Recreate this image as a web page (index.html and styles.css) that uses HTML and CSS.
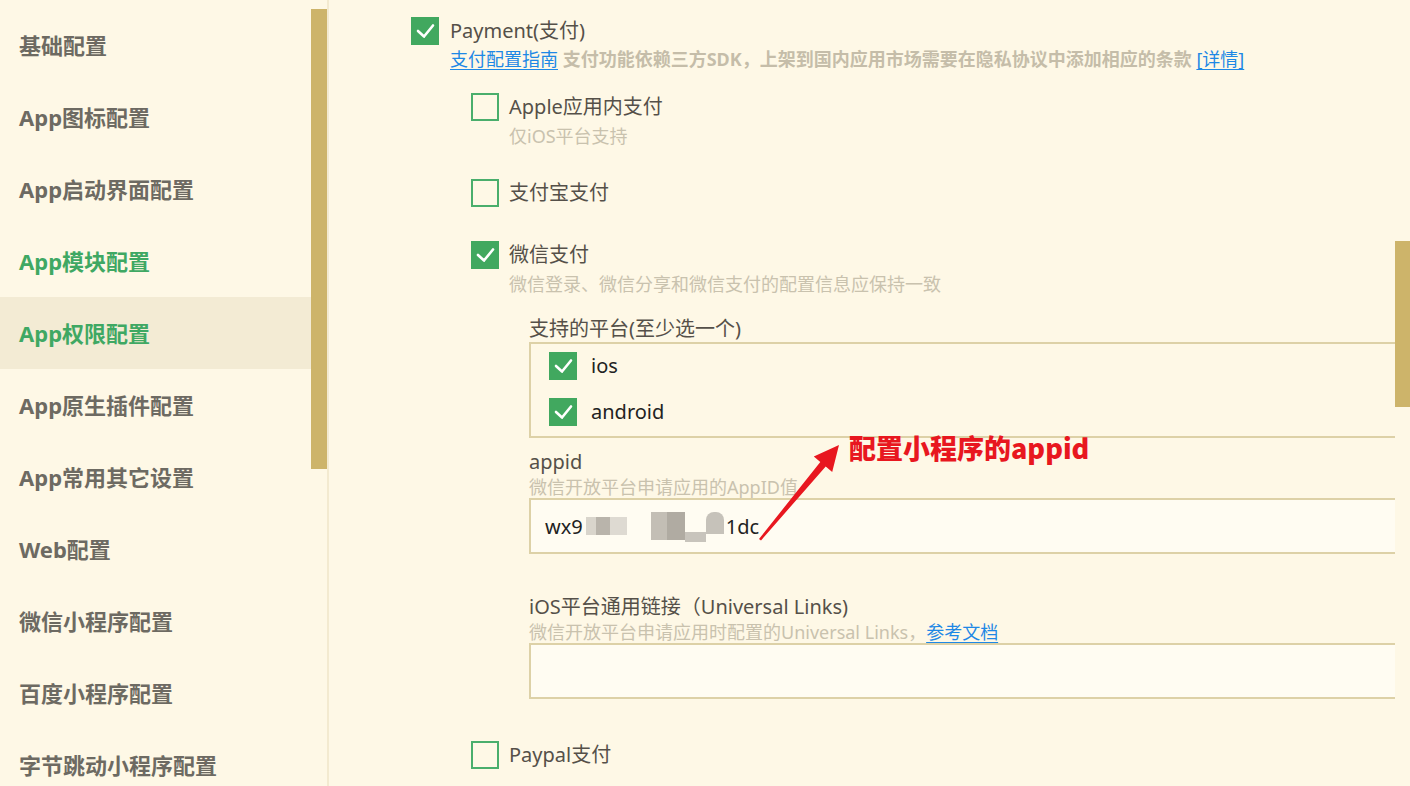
FILE: index.html
```html
<!DOCTYPE html>
<html lang="zh-CN">
<head>
<meta charset="utf-8">
<title>App权限配置</title>
<link rel="stylesheet" href="styles.css">
</head>
<body>
<div class="app">
  <aside class="sidebar">
    <nav class="nav">
      <div class="nav-item">基础配置</div>
      <div class="nav-item">App图标配置</div>
      <div class="nav-item">App启动界面配置</div>
      <div class="nav-item green">App模块配置</div>
      <div class="nav-item green active">App权限配置</div>
      <div class="nav-item">App原生插件配置</div>
      <div class="nav-item">App常用其它设置</div>
      <div class="nav-item">Web配置</div>
      <div class="nav-item">微信小程序配置</div>
      <div class="nav-item">百度小程序配置</div>
      <div class="nav-item">字节跳动小程序配置</div>
    </nav>
    <div class="side-scroll"><div class="side-thumb"></div></div>
  </aside>

  <main class="main">
    <div class="content">
      <div class="row">
        <span class="cb checked"><svg viewBox="0 0 28 28"><polyline points="7,14 13,19.5 22,8.5"/></svg></span>
        <span class="label">Payment(支付)</span>
      </div>
      <div class="top-desc"><a class="link">支付配置指南</a> 支付功能依赖三方SDK，上架到国内应用市场需要在隐私协议中添加相应的条款 <a class="link">[详情]</a></div>

      <div class="sublist">
        <div class="option">
          <div class="row">
            <span class="cb"></span>
            <span class="label">Apple应用内支付</span>
          </div>
          <div class="desc">仅iOS平台支持</div>
        </div>

        <div class="option">
          <div class="row">
            <span class="cb"></span>
            <span class="label">支付宝支付</span>
          </div>
        </div>

        <div class="option wechat">
          <div class="row">
            <span class="cb checked"><svg viewBox="0 0 28 28"><polyline points="7,14 13,19.5 22,8.5"/></svg></span>
            <span class="label">微信支付</span>
          </div>
          <div class="desc">微信登录、微信分享和微信支付的配置信息应保持一致</div>

          <div class="nested">
            <div class="field-label">支持的平台(至少选一个)</div>
            <div class="platform-box">
              <div class="row plat">
                <span class="cb checked"><svg viewBox="0 0 28 28"><polyline points="7,14 13,19.5 22,8.5"/></svg></span>
                <span class="label dark">ios</span>
              </div>
              <div class="row plat">
                <span class="cb checked"><svg viewBox="0 0 28 28"><polyline points="7,14 13,19.5 22,8.5"/></svg></span>
                <span class="label dark">android</span>
              </div>
            </div>

            <div class="field-label gap-s">appid</div>
            <div class="field-sub">微信开放平台申请应用的AppID值</div>
            <div class="input">
              <span>wx9</span><span class="mosaic"><i class="m1"></i><i class="m2"></i><i class="m3"></i><i class="m4"></i><i class="m5"></i><i class="m6"></i><i class="m7"></i><i class="m8"></i></span><span>1dc</span>
            </div>

            <div class="field-label gap-l">iOS平台通用链接（Universal Links)</div>
            <div class="field-sub">微信开放平台申请应用时配置的Universal Links，<a class="link">参考文档</a></div>
            <div class="input"></div>
          </div>
        </div>

        <div class="option">
          <div class="row">
            <span class="cb"></span>
            <span class="label">Paypal支付</span>
          </div>
        </div>
      </div>
    </div>
    <div class="main-scroll"><div class="main-thumb"></div></div>
  </main>

  <svg class="arrow" width="1410" height="786" viewBox="0 0 1410 786">
    <polygon points="839,445 832.2,471.9 825.7,466.4 761,540.5 759,539 820.3,462 813.8,456.5"/>
  </svg>
  <div class="annot">配置小程序的appid</div>
</div>
</body>
</html>
```

FILE: styles.css
```css
* { box-sizing: border-box; }

html, body {
  margin: 0;
  padding: 0;
  height: 786px;
  overflow: hidden;
  background: #fef8e6;
  font-family: "Noto Sans", "Noto Sans CJK SC", sans-serif;
}

.app {
  position: relative;
  display: flex;
  width: 1410px;
  height: 786px;
  overflow: hidden;
}

/* ---------- sidebar ---------- */
.sidebar {
  flex: none;
  width: 329px;
  display: flex;
  border-right: 2px solid #f3ead0;
}

.nav {
  width: 311px;
  padding-top: 9px;
}

.nav-item {
  height: 72px;
  line-height: 72px;
  padding-left: 19px;
  font-size: 22px;
  font-weight: 700;
  color: #6d6a62;
  white-space: nowrap;
}

.nav-item.green { color: #3fa863; }
.nav-item.active { background: #f3ebd4; }

.side-scroll {
  width: 16px;
  padding-top: 9px;
}

.side-thumb {
  height: 460px;
  background: #cdb46a;
}

/* ---------- main ---------- */
.main {
  flex: 1;
  display: flex;
  min-width: 0;
}

.content {
  flex: 1;
  min-width: 0;
  padding: 17px 0 0 82px;
}

.main-scroll {
  flex: none;
  width: 15px;
  padding-top: 241px;
}

.main-thumb {
  height: 166px;
  background: #cdb46a;
}

.row {
  display: flex;
  align-items: center;
  height: 28px;
  gap: 11px;
}

.cb {
  flex: none;
  width: 28px;
  height: 28px;
  border: 2px solid #4aae6c;
  display: flex;
  align-items: center;
  justify-content: center;
}

.cb.checked {
  background: #41a85f;
  border-color: #41a85f;
}

.cb svg {
  width: 28px;
  height: 28px;
  margin: -2px;
}

.cb svg polyline {
  fill: none;
  stroke: #ffffff;
  stroke-width: 2.6;
  stroke-linecap: round;
  stroke-linejoin: round;
}

.label {
  font-size: 20px;
  line-height: 28px;
  color: #555049;
  white-space: nowrap;
}

.label.dark { color: #222222; }

.link {
  color: #1e88e5;
  font-weight: 400;
  text-decoration: underline;
  text-underline-offset: 3px;
}

.top-desc {
  margin: 2px 0 0 39px;
  font-size: 18px;
  line-height: 24px;
  font-weight: 700;
  color: #c5bda9;
  white-space: nowrap;
}

.sublist {
  margin: 22px 0 0 60px;
}

.option {
  padding-bottom: 34px;
}

.option.wechat { padding-bottom: 42px; }

.option .row { gap: 10px; }

.desc {
  margin: 3px 0 -3px 38px;
  font-size: 18px;
  line-height: 24px;
  color: #c9c2ae;
  white-space: nowrap;
}

.nested {
  margin: 23px 0 0 58px;
}

.field-label {
  font-size: 20px;
  line-height: 26px;
  color: #555049;
  white-space: nowrap;
}

.field-label.gap-s { margin-top: 11px; }
.field-label.gap-l { margin-top: 40px; }

.field-sub {
  margin-top: 1px;
  font-size: 18px;
  line-height: 22px;
  color: #c9c2ae;
  white-space: nowrap;
}

.platform-box {
  border: 2px solid #ddd1a7;
  border-right: none;
  padding: 8px 18px 10px;
  display: flex;
  flex-direction: column;
  gap: 18px;
}

.platform-box .row { gap: 14px; }

.input {
  height: 56px;
  border: 2px solid #ddd1a7;
  border-right: none;
  background: #fffcf2;
  padding-left: 14px;
  display: flex;
  align-items: center;
  font-size: 20px;
  color: #222222;
}

.mosaic {
  display: inline-flex;
  align-items: center;
  height: 32px;
  margin: 0 2px 0 3px;
}

.mosaic i { display: block; }
.mosaic .m1 { width: 10px; height: 18px; background: #d9d5cc; }
.mosaic .m2 { width: 14px; height: 18px; background: #b9b4ab; }
.mosaic .m3 { width: 17px; height: 18px; background: #dedad2; }
.mosaic .m4 { width: 24px; height: 18px; background: transparent; }
.mosaic .m5 { width: 16px; height: 28px; background: #c3beb5; }
.mosaic .m6 { width: 18px; height: 28px; background: #b0aba2; }
.mosaic .m7 { width: 21px; height: 10px; background: #c8c4bc; align-self: flex-end; }
.mosaic .m8 { width: 18px; height: 22px; background: #c6c2ba; border-radius: 8px 8px 0 0; align-self: flex-start; margin-top: 2px; }

/* ---------- annotation overlay ---------- */
.arrow {
  position: absolute;
  left: 0;
  top: 0;
  pointer-events: none;
}

.arrow polygon { fill: #e8171f; }

.annot {
  position: absolute;
  left: 849px;
  top: 431px;
  font-family: "Noto Sans CJK SC", sans-serif;
  font-size: 27px;
  line-height: 34px;
  font-weight: 900;
  color: #e8171f;
  white-space: nowrap;
}
```
